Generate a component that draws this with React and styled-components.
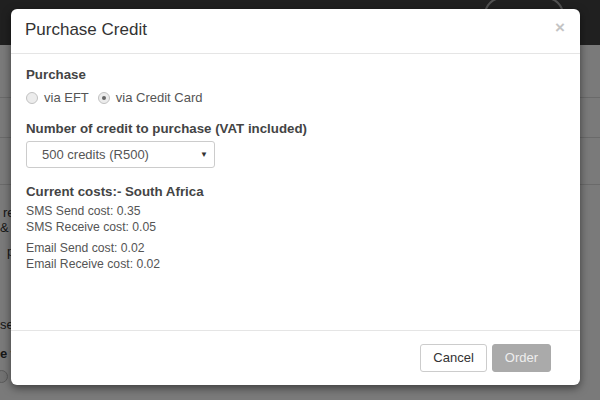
import React from 'react'
import styled, { createGlobalStyle } from 'styled-components'

const font = '"Liberation Sans", Arial, sans-serif'
const line_color = '#e5e5e5'

const GlobalStyle = createGlobalStyle`
  html, body {
    margin: 0;
    padding: 0;
    background: #7a7a7a;
  }
  body {
    font-family: ${font};
  }
`

const Page = styled.div`
  position: relative;
  width: 600px;
  height: 400px;
  overflow: hidden;
  background: #fff;
  font-family: ${font};
`

const TopBar = styled.div`
  height: 45px;
  background: #444;
  display: flex;
  justify-content: flex-end;
  padding-right: 36px;
`

const NavPill = styled.div`
  width: 76px;
  height: 32px;
  margin-top: -3px;
  border: 2px solid #aaa;
  border-radius: 18px;
`

const PageBody = styled.div`
  display: flex;
  flex-direction: column;
`

const Rule = styled.div`
  height: ${props => props.h}px;
  border-bottom: 1px solid #ddd;
`

const Ghost = styled.div`
  margin-left: ${props => props.shift || 0}px;
  margin-top: ${props => props.gap || 0}px;
  font-size: 13px;
  line-height: 15px;
  color: #333;
  font-weight: ${props => props.bold ? 'bold' : 'normal'};
  white-space: nowrap;
`

const GhostRadio = styled.div`
  width: 11px;
  height: 11px;
  margin: 9px 0 0 -5px;
  border-radius: 50%;
  border: 1px solid #bbb;
  background: #eee;
`

const Backdrop = styled.div`
  position: absolute;
  inset: 0;
  background: rgba(0, 0, 0, 0.52);
`

const Modal = styled.div`
  position: absolute;
  left: 11px;
  top: 9px;
  width: 569px;
  height: 376px;
  background: #fff;
  border-radius: 6px;
  box-shadow: 0 3px 9px rgba(0, 0, 0, 0.5);
  display: flex;
  flex-direction: column;
  color: #555;
`

const Header = styled.div`
  height: 45px;
  box-sizing: border-box;
  border-bottom: 1px solid ${line_color};
  display: flex;
  align-items: center;
  justify-content: space-between;
  padding: 0 15px 2px 14px;
`

const Title = styled.div`
  font-size: 17px;
  color: #333;
`

const Close = styled.div`
  font-size: 17px;
  font-weight: bold;
  color: #c4c4c4;
  margin-top: -4px;
`

const Body = styled.div`
  flex: 1;
  padding: 13px 15px 0 15px;
`

const Label = styled.div`
  font-size: 13.3px;
  font-weight: bold;
  color: #444;
  line-height: 15px;
  margin-top: ${props => props.gap || 0}px;
`

const RadioRow = styled.div`
  display: flex;
  align-items: center;
  margin-top: 8px;
  font-size: 13px;
  line-height: 15px;
  color: #555;
`

const RadioDot = styled.span`
  width: 10px;
  height: 10px;
  border-radius: 50%;
  border: 1px solid #c2c2c2;
  background: #ececec;
  margin: 0 6px 0 0;
  position: relative;
  &::after {
    content: '';
    display: ${props => props.checked ? 'block' : 'none'};
    position: absolute;
    left: 3px;
    top: 3px;
    width: 4px;
    height: 4px;
    border-radius: 50%;
    background: #666;
  }
`

const RadioText = styled.span`
  margin-right: ${props => props.gap || 0}px;
`

const Select = styled.div`
  width: 189px;
  height: 27px;
  box-sizing: border-box;
  margin-top: 5px;
  border: 1px solid #ccc;
  border-radius: 3px;
  display: flex;
  align-items: center;
  justify-content: space-between;
  padding: 0 6px 0 15px;
  font-size: 13px;
  color: #555;
`

const Caret = styled.span`
  font-size: 8px;
  color: #333;
`

const CostLine = styled.div`
  font-size: 12.2px;
  line-height: 16px;
  color: #555;
  margin-top: ${props => props.gap || 0}px;
`

const Footer = styled.div`
  height: 53px;
  border-top: 1px solid ${line_color};
  display: flex;
  align-items: center;
  justify-content: flex-end;
  gap: 5px;
  padding: 0 29px 1px 0;
`

const Button = styled.div`
  height: 28px;
  box-sizing: border-box;
  padding: 0 ${props => props.pad}px;
  display: flex;
  align-items: center;
  font-size: 13px;
  border-radius: 3px;
  border: 1px solid ${props => props.primary ? '#aaa' : '#ccc'};
  background: ${props => props.primary ? '#aaa' : '#fff'};
  color: ${props => props.primary ? '#eee' : '#333'};
`

export default function App() {
  return (
    <Page>
      <GlobalStyle />
      <TopBar>
        <NavPill />
      </TopBar>
      <PageBody>
        <Rule h={52} />
        <Rule h={39} />
        <Rule h={46} />
        <Ghost shift={3} gap={20}>re</Ghost>
        <Ghost>&amp; r</Ghost>
        <Ghost shift={7} gap={9}>p</Ghost>
        <Ghost gap={58}>se</Ghost>
        <Ghost gap={14} bold>e t</Ghost>
        <GhostRadio />
      </PageBody>
      <Backdrop />
      <Modal>
        <Header>
          <Title>Purchase Credit</Title>
          <Close>×</Close>
        </Header>
        <Body>
          <Label>Purchase</Label>
          <RadioRow>
            <RadioDot />
            <RadioText gap={9}>via EFT</RadioText>
            <RadioDot checked />
            <RadioText>via Credit Card</RadioText>
          </RadioRow>
          <Label gap={16}>Number of credit to purchase (VAT included)</Label>
          <Select>
            <span>500 credits (R500)</span>
            <Caret>▼</Caret>
          </Select>
          <Label gap={16}>Current costs:- South Africa</Label>
          <CostLine gap={4}>SMS Send cost: 0.35</CostLine>
          <CostLine>SMS Receive cost: 0.05</CostLine>
          <CostLine gap={5}>Email Send cost: 0.02</CostLine>
          <CostLine>Email Receive cost: 0.02</CostLine>
        </Body>
        <Footer>
          <Button pad={12}>Cancel</Button>
          <Button primary pad={12}>Order</Button>
        </Footer>
      </Modal>
    </Page>
  )
}
